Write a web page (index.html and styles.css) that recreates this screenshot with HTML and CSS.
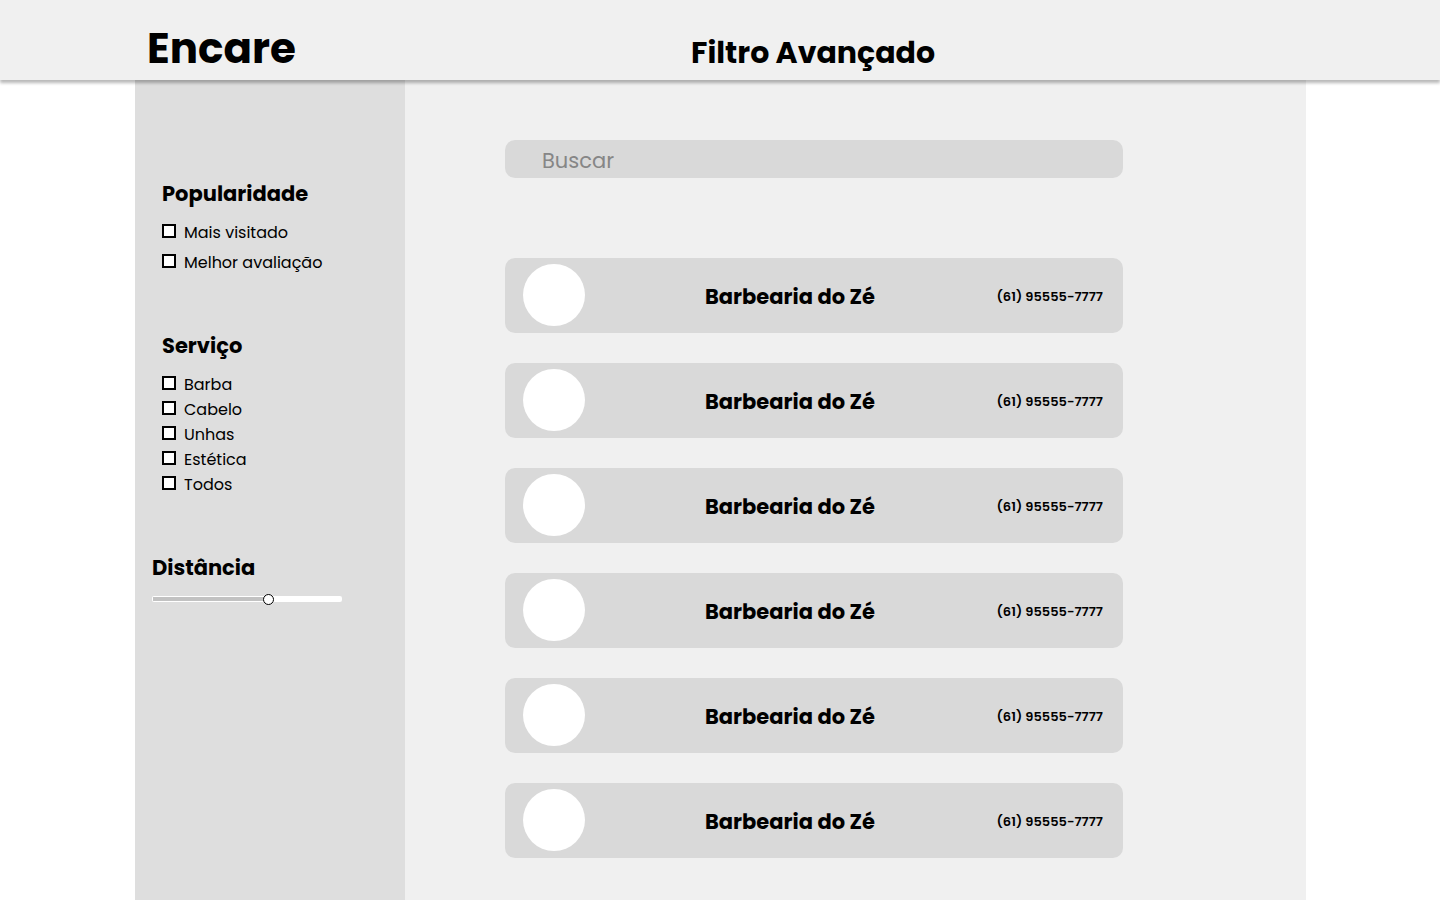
FILE: index.html
```html
<!DOCTYPE html>
<html lang="pt-BR">
<head>
<meta charset="utf-8">
<meta name="viewport" content="width=device-width, initial-scale=1">
<title>Encare - Filtro Avançado</title>
<link rel="stylesheet" href="styles.css">
</head>
<body>
<header class="topbar">
  <div class="brand">Encare</div>
  <h1 class="page-title">Filtro Avançado</h1>
</header>
<div class="shell">
  <aside class="filters">
    <fieldset class="group group-roomy">
      <legend class="group-title">Popularidade</legend>
      <label class="option"><input class="check" type="checkbox">Mais visitado</label>
      <label class="option"><input class="check" type="checkbox">Melhor avaliação</label>
    </fieldset>
    <fieldset class="group">
      <legend class="group-title">Serviço</legend>
      <label class="option"><input class="check" type="checkbox">Barba</label>
      <label class="option"><input class="check" type="checkbox">Cabelo</label>
      <label class="option"><input class="check" type="checkbox">Unhas</label>
      <label class="option"><input class="check" type="checkbox">Estética</label>
      <label class="option"><input class="check" type="checkbox">Todos</label>
    </fieldset>
    <div class="distance">
      <label class="group-title" for="distance">Distância</label>
      <input class="slider" id="distance" type="range" min="0" max="100" value="62">
    </div>
  </aside>
  <main class="content">
    <input class="search" type="search" placeholder="Buscar" aria-label="Buscar">
    <ul class="results">
      <li class="card"><span class="avatar"></span><h2 class="name">Barbearia do Zé</h2><span class="phone">(61) 95555-7777</span></li>
      <li class="card"><span class="avatar"></span><h2 class="name">Barbearia do Zé</h2><span class="phone">(61) 95555-7777</span></li>
      <li class="card"><span class="avatar"></span><h2 class="name">Barbearia do Zé</h2><span class="phone">(61) 95555-7777</span></li>
      <li class="card"><span class="avatar"></span><h2 class="name">Barbearia do Zé</h2><span class="phone">(61) 95555-7777</span></li>
      <li class="card"><span class="avatar"></span><h2 class="name">Barbearia do Zé</h2><span class="phone">(61) 95555-7777</span></li>
      <li class="card"><span class="avatar"></span><h2 class="name">Barbearia do Zé</h2><span class="phone">(61) 95555-7777</span></li>
    </ul>
  </main>
</div>
</body>
</html>
```
FILE: styles.css
```css
* { box-sizing: border-box; }

body {
  margin: 0;
  background: #fff;
  color: #000;
  font-family: Poppins, Inter, "Open Sans", sans-serif;
}

.topbar {
  position: relative;
  z-index: 1;
  display: grid;
  grid-template-columns: 544px 1fr;
  align-items: last baseline;
  height: 80px;
  padding: 20px 134px 3px 147px;
  background: #f0f0f0;
  box-shadow: 0 3px 3px rgba(0, 0, 0, 0.28);
}

.brand {
  font-size: 42px;
  font-weight: 700;
  line-height: 56px;
}

.page-title {
  margin: 0;
  font-size: 30px;
  font-weight: 700;
  line-height: 40px;
}

.shell {
  display: grid;
  grid-template-columns: 270px 1fr;
  min-height: calc(100vh - 80px);
  margin: 0 134px 0 135px;
  background: #f0f0f0;
}

.filters {
  padding: 98px 16px 40px 27px;
  background: #dedede;
}

.group {
  margin: 0 0 54px;
  padding: 0;
  border: 0;
}

.group-title {
  display: block;
  padding: 0;
  font-size: 21px;
  font-weight: 700;
  line-height: 32px;
}

.group .group-title { margin-bottom: 10px; }

.option {
  display: flex;
  align-items: center;
  gap: 8px;
  height: 25px;
  font-size: 16px;
}

.group-roomy { margin-bottom: 53px; }

.group-roomy .group-title { margin-bottom: 7px; }

.group-roomy .option { height: 30px; }

.check {
  appearance: none;
  width: 14px;
  height: 14px;
  margin: 0 0 3px;
  border: 2px solid #000;
  background: #fff;
}

.check:checked { background: #000; }

.distance { margin: 55px 0 0 -10px; }

.slider {
  appearance: none;
  display: block;
  width: 190px;
  height: 6px;
  margin: 12px 0 0;
  border-radius: 2px;
  background: linear-gradient(#c2c2c2, #c2c2c2) 1px center / 62% 4px no-repeat #fff;
}

.slider::-webkit-slider-thumb {
  appearance: none;
  width: 11px;
  height: 11px;
  border: 1px solid #000;
  border-radius: 50%;
  background: #fff;
}

.content { padding: 60px 100px 42px; }

.search {
  appearance: none;
  display: block;
  width: 100%;
  max-width: 618px;
  height: 38px;
  padding: 2px 37px 0;
  border: 0;
  border-radius: 10px;
  background: #d9d9d9;
  color: #000;
  font: 400 21px Poppins, Inter, "Open Sans", sans-serif;
}

.search::placeholder { color: #868686; }

.results {
  display: grid;
  gap: 30px;
  max-width: 618px;
  margin: 80px 0 0;
  padding: 0;
  list-style: none;
}

.card {
  display: grid;
  grid-template-columns: 182px 1fr auto;
  align-items: center;
  min-height: 75px;
  padding: 0 20px 0 18px;
  border-radius: 10px;
  background: #d9d9d9;
}

.avatar {
  width: 62px;
  height: 62px;
  margin-bottom: 1px;
  border-radius: 50%;
  background: #fff;
}

.name {
  margin: 0;
  padding-top: 2px;
  font-size: 21px;
  font-weight: 700;
}

.phone {
  padding-top: 2px;
  font-size: 13px;
  font-weight: 600;
}
```
